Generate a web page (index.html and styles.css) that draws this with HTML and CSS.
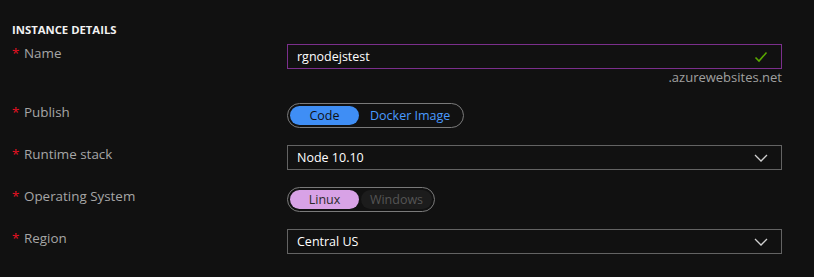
FILE: index.html
```html
<!DOCTYPE html>
<html lang="en">
<head>
  <meta charset="UTF-8" />
  <title>Instance details</title>
  <link rel="stylesheet" href="styles.css">
</head>
<body>
  <section class="details">
    <h2>Instance details</h2>

    <div class="form-grid">
      <label class="field-label"><span class="req">*</span>Name</label>
      <div class="control">
        <div class="text-box valid">
          <span>rgnodejstest</span>
          <svg class="check" width="14" height="12" viewBox="0 0 14 12"><path d="M1.5 6.5 L5 10 L12.5 1.5" fill="none" stroke="#5aa800" stroke-width="1.6"/></svg>
        </div>
        <div class="suffix">.azurewebsites.net</div>
      </div>

      <label class="field-label"><span class="req">*</span>Publish</label>
      <div class="control">
        <div class="toggle blue">
          <span class="opt on">Code</span>
          <span class="opt">Docker Image</span>
        </div>
      </div>

      <label class="field-label"><span class="req">*</span>Runtime stack</label>
      <div class="control">
        <div class="text-box select">
          <span>Node 10.10</span>
          <svg class="chev" width="14" height="8" viewBox="0 0 14 8"><path d="M1 1 L7 7 L13 1" fill="none" stroke="#d0d0d0" stroke-width="1.3"/></svg>
        </div>
      </div>

      <label class="field-label"><span class="req">*</span>Operating System</label>
      <div class="control">
        <div class="toggle pink">
          <span class="opt on">Linux</span>
          <span class="opt off">Windows</span>
        </div>
      </div>

      <label class="field-label"><span class="req">*</span>Region</label>
      <div class="control">
        <div class="text-box select">
          <span>Central US</span>
          <svg class="chev" width="14" height="8" viewBox="0 0 14 8"><path d="M1 1 L7 7 L13 1" fill="none" stroke="#d0d0d0" stroke-width="1.3"/></svg>
        </div>
      </div>
    </div>
  </section>
</body>
</html>
```

FILE: styles.css
```css
html, body {
  margin: 0;
  background: #111111;
}
body {
  font-family: 'Open Sans', 'Noto Sans', sans-serif;
  color: #e6e6e6;
}
.details {
  padding: 22px 0 0 12px;
}
h2 {
  margin: 0 0 7px;
  font-size: 11.3px;
  line-height: 15px;
  font-weight: 700;
  text-transform: uppercase;
  color: #f2f2f2;
}
.form-grid {
  display: grid;
  grid-template-columns: 275px 495px;
  row-gap: 17px;
}
.field-label {
  font-size: 13.4px;
  line-height: 19px;
  color: #a6a6a6;
}
.req {
  color: #e81123;
  display: inline-block;
  width: 12px;
}
.control {
  display: flex;
  flex-direction: column;
}
.text-box {
  height: 25px;
  box-sizing: border-box;
  border: 1px solid #636363;
  display: flex;
  align-items: center;
  justify-content: space-between;
  padding: 0 13px 0 9px;
  font-size: 12.5px;
  color: #ffffff;
}
.text-box.valid {
  border-color: #7b2f8c;
}
.suffix {
  text-align: right;
  font-size: 13px;
  line-height: 17px;
  color: #a0a0a0;
}
.toggle {
  align-self: flex-start;
  height: 25px;
  box-sizing: border-box;
  border: 1px solid #7a7a7a;
  border-radius: 13px;
  padding: 2px;
  display: flex;
  gap: 2px;
  font-size: 12.5px;
}
.opt {
  display: flex;
  align-items: center;
  justify-content: center;
  border-radius: 10px;
  padding: 0 10px;
}
.toggle .opt.on {
  width: 69px;
  box-sizing: border-box;
}
.toggle.blue .opt.on {
  background: #3f8ef5;
  color: #111;
}
.toggle.blue .opt:not(.on) {
  color: #4a9bff;
  padding: 0 11px 0 9px;
}
.toggle.pink .opt.on {
  background: #d8a2e6;
  color: #2b2b2b;
}
.toggle.pink .opt.off {
  background: #1c1c1c;
  color: #555555;
  width: 71px;
  box-sizing: border-box;
}
```
